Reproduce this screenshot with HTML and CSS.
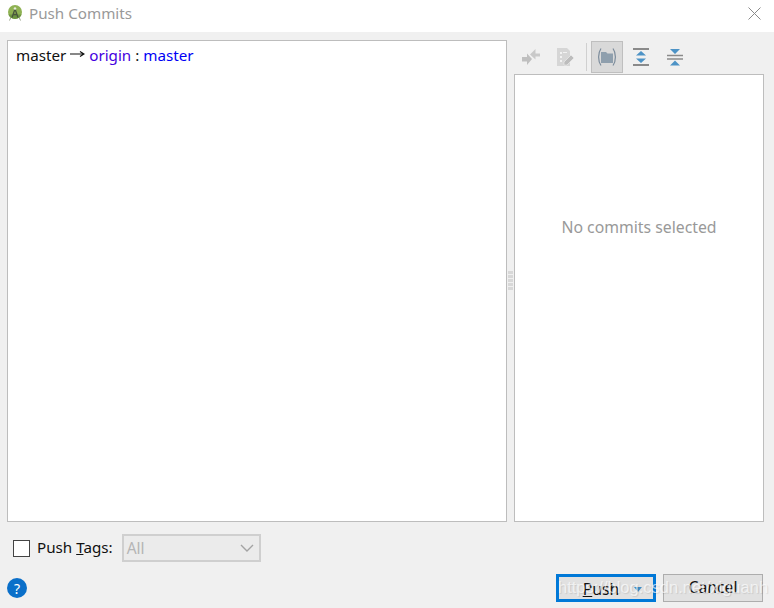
FILE: index.html
```html
<!DOCTYPE html>
<html lang="en">
<head>
<meta charset="utf-8">
<title>Push Commits</title>
<link rel="stylesheet" href="styles.css">
</head>
<body>
<div class="dialog">
  <header class="titlebar">
    <div class="title-left">
      <svg class="app-icon" width="16" height="16" viewBox="0 0 16 16">
        <path d="M4 12 2.500 15.500M12 12l1.500 3.500" stroke="#9aa58c" stroke-width="1" fill="none"/>
        <circle cx="8" cy="7" r="7" fill="#8fb253"/>
        <path d="M1.500 9.500a7 7 0 0 0 13 0z" fill="#6c9440"/>
        <path d="M5 12.500 8 4l3 8.500M5.500 9.500h5" fill="none" stroke="#48563c" stroke-width="1.300"/>
        <circle cx="8" cy="3.500" r="1.300" fill="#e8efd8"/>
      </svg>
      <span class="title-text">Push Commits</span>
    </div>
    <svg class="close-icon" width="13" height="13" viewBox="0 0 13 13">
      <path d="M.5.500l12 12M12.500.500l-12 12" stroke="#8a8a8a" stroke-width="1" fill="none"/>
    </svg>
  </header>

  <main class="content">
    <section class="tree-panel">
      <span class="ref">master</span>
      <svg class="arrow" width="15" height="8" viewBox="0 0 15 8"><path d="M0 4h13M10 1.500 14 4l-4 2.500" fill="none" stroke="#111" stroke-width="1.200"/></svg>
      <span class="remote">origin</span>
      <span class="ref">:</span>
      <span class="branch">master</span>
    </section>

    <div class="splitter">
      <span class="grip"></span><span class="grip"></span><span class="grip"></span><span class="grip"></span><span class="grip"></span>
    </div>

    <section class="details">
      <div class="toolbar">
        <span class="tool">
          <svg width="20" height="20" viewBox="0 0 20 20">
            <path d="M1 10h5V6.500l5 5.500-5 6v-3.500H1z" fill="#bfbfbf"/>
            <path d="M19 6.500h-4.500V2L9 7.500l5.500 5V9.500H19z" fill="#c9c9c9"/>
          </svg>
        </span>
        <span class="tool">
          <svg width="20" height="20" viewBox="0 0 20 20">
            <path d="M2 1h10l3 3v15H2z" fill="#d6d6d6"/>
            <path d="M5 5h2v2H5zM5 9h2v2H5zM5 13h2v2H5zM8 5h4v1H8z" fill="#f2f2f2"/>
            <path d="M9 15 16 8l3 3-7 7H9z" fill="#bdbdbd" stroke="#f0f0f0" stroke-width=".6"/>
          </svg>
        </span>
        <span class="separator"></span>
        <span class="tool tool-active">
          <svg width="20" height="20" viewBox="0 0 20 20">
            <path d="M4 1.500C.8 6 .8 14 4 18.500M16 1.500C19.200 6 19.200 14 16 18.500" fill="none" stroke="#7b8b9b" stroke-width="1.200"/>
            <path d="M4 5h5l1.500 1.500H16V16H4z" fill="#8f9fad"/>
          </svg>
        </span>
        <span class="tool">
          <svg width="18" height="20" viewBox="0 0 18 20">
            <path d="M1 2h16M1 18h16" stroke="#8a8a8a" stroke-width="2"/>
            <path d="M9 4l5 4.500H4zM9 16l-5-4.500h10z" fill="#4d93c6"/>
          </svg>
        </span>
        <span class="tool">
          <svg width="18" height="20" viewBox="0 0 18 20">
            <path d="M1 8.500h16M1 12h16" stroke="#8a8a8a" stroke-width="1.600"/>
            <path d="M9 7 4 2h10zM9 13.500l5 5H4z" fill="#4d93c6"/>
          </svg>
        </span>
      </div>
      <div class="details-body">No commits selected</div>
    </section>
  </main>

  <div class="tags-row">
    <span class="checkbox"></span>
    <span class="tags-label">Push <u>T</u>ags:</span>
    <div class="select">
      <span>All</span>
      <svg width="14" height="8" viewBox="0 0 14 8"><path d="M1 1l6 6 6-6" fill="none" stroke="#a3a3a3" stroke-width="1.400"/></svg>
    </div>
  </div>

  <footer class="footer">
    <span class="help">?</span>
    <div class="buttons">
      <button class="btn btn-primary"><span class="push-text"><u>P</u>ush</span><i class="caret"></i></button>
      <button class="btn">Cancel</button>
    </div>
    <span class="watermark">https://blog.csdn.net/xiguanh</span>
  </footer>
</div>
</body>
</html>
```

FILE: styles.css
```css
* { box-sizing: border-box; }
html, body { margin: 0; padding: 0; }
body {
  width: 774px;
  height: 608px;
  overflow: hidden;
  background: #f0f0f0;
  color: #111;
  font-family: "Noto Sans", "Open Sans", sans-serif;
  font-size: 15px;
}
.dialog { display: flex; flex-direction: column; height: 608px; }

.titlebar {
  height: 32px;
  flex: none;
  background: #fff;
  display: flex;
  align-items: center;
  justify-content: space-between;
  padding: 0 13px 6px 7px;
}
.title-left { display: flex; align-items: center; gap: 6px; }
.title-text { color: #999; font-size: 15.200px; }
.app-icon { display: block; }
.close-icon { display: block; }

.content {
  display: flex;
  height: 482px;
  margin-top: 8px;
  padding: 0 10px 0 7px;
  flex: none;
}
.tree-panel {
  width: 500px;
  background: #fff;
  border: 1px solid #bdbdbd;
  padding: 3px 8px;
  line-height: 22px;
  display: block;
  font-size: 15.200px;
}
.tree-panel .arrow { margin: 0 0 3px 0; }
.remote { color: #4500e0; }
.branch { color: #0000f5; }
.splitter {
  width: 7px;
  display: flex;
  flex-direction: column;
  align-items: center;
  justify-content: center;
  gap: 1px;
  padding-bottom: 2px;
}
.grip { width: 5px; height: 3px; background: #d8d8d8; }

.details { width: 250px; display: flex; flex-direction: column; }
.toolbar { height: 34px; display: flex; align-items: center; padding: 0 0 1px 1px; flex: none; }
.tool {
  width: 32px;
  height: 32px;
  display: flex;
  align-items: center;
  justify-content: center;
  margin-right: 2px;
}
.tool-active { background: #d9d9d9; border: 1px solid #bfbfbf; }
.separator { width: 1px; height: 28px; background: #d0d0d0; margin: 0 4px 0 3px; }
.details-body {
  flex: 1;
  background: #fff;
  border: 1px solid #bdbdbd;
  display: flex;
  align-items: center;
  justify-content: center;
  color: #999;
  font-size: 15.800px;
  padding-bottom: 142px;
}

.tags-row {
  display: flex;
  align-items: center;
  height: 28px;
  margin-top: 12px;
  padding-left: 13px;
  flex: none;
}
.checkbox { width: 17px; height: 17px; background: #fff; border: 1px solid #444; }
.tags-label { margin-left: 7px; font-size: 15.200px; padding-bottom: 3px; }
.select {
  width: 139px;
  height: 28px;
  margin-left: 9px;
  background: #ebebeb;
  border: 2px solid #cfcfcf;
  color: #b5b5b5;
  display: flex;
  align-items: center;
  justify-content: space-between;
  padding: 0 5px 0 3px;
  font-size: 15.500px;
}

.footer {
  position: relative;
  display: flex;
  align-items: center;
  justify-content: space-between;
  height: 28px;
  margin-top: 12px;
  padding: 0 11px 0 7px;
  flex: none;
}
.help {
  width: 20px;
  height: 20px;
  border-radius: 50%;
  background: #0a6fc9;
  color: #fff;
  font-size: 14px;
  display: flex;
  align-items: center;
  justify-content: center;
}
.buttons { display: flex; gap: 7px; }
.btn {
  width: 100px;
  height: 28px;
  background: #e1e1e1;
  border: 1px solid #adadad;
  color: #111;
  font: inherit;
  font-size: 15.800px;
  line-height: 24px;
  padding: 0 0 2px;
  position: relative;
}
.btn-primary { border: 3px solid #0078d7; padding-right: 10px; }
.caret {
  position: absolute;
  left: 75px;
  top: 10px;
  border-left: 4px solid transparent;
  border-right: 4px solid transparent;
  border-top: 5px solid #3d8cc4;
}
.watermark {
  position: absolute;
  left: 558px;
  top: 2px;
  color: rgba(255, 255, 255, 0.65);
  text-shadow: 1px 1px 1px rgba(0, 0, 0, 0.1);
  font-family: "Liberation Sans", sans-serif;
  font-size: 16.500px;
  line-height: 22px;
  white-space: nowrap;
  pointer-events: none;
}
```
